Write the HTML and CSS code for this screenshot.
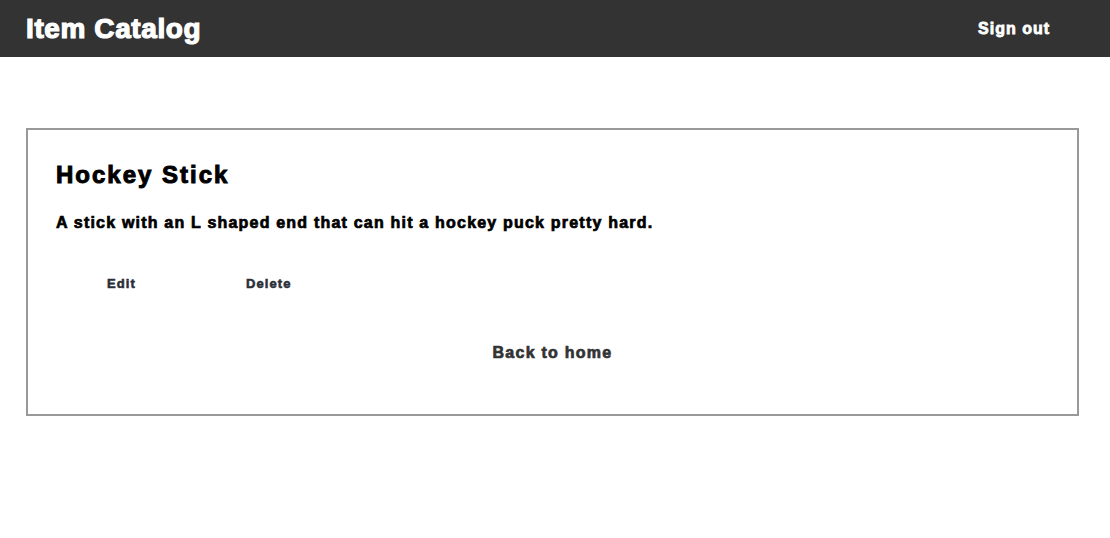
FILE: index.html
```html
<!DOCTYPE html>
<html>
<head>
<meta charset="utf-8">
<link rel="stylesheet" href="styles.css">
</head>
<body>
<header class="topbar">
  <div class="brand">Item Catalog</div>
  <a class="signout" href="#">Sign out</a>
</header>
<main class="card">
  <h1 class="item-title">Hockey Stick</h1>
  <p class="item-desc">A stick with an L shaped end that can hit a hockey puck pretty hard.</p>
  <div class="actions">
    <a class="action edit" href="#">Edit</a>
    <a class="action delete" href="#">Delete</a>
  </div>
  <div class="back"><a href="#">Back to home</a></div>
</main>
</body>
</html>
```
FILE: styles.css
```css
* { box-sizing: border-box; }
body {
  margin: 0;
  font-family: "Liberation Sans", Arial, sans-serif;
  font-weight: bold;
  background: #fff;
}
a { text-decoration: none; }
.topbar {
  height: 57px;
  background: #333333;
  display: flex;
  align-items: center;
  justify-content: space-between;
  padding: 0 60px 0 26px;
}
.brand {
  color: #fff;
  font-size: 28px;
  font-weight: bold;
  -webkit-text-stroke: 1.2px #fff;
  letter-spacing: 0.6px;
}
.signout {
  color: #fff;
  font-size: 16px;
  -webkit-text-stroke: 0.8px #fff;
  letter-spacing: 1px;
}
.card {
  margin: 71px 31px 0 26px;
  border: 2px solid #999999;
  padding: 28px 28px 51px 28px;
}
.item-title {
  margin: 0;
  font-size: 24px;
  color: #000;
  -webkit-text-stroke: 1px #000;
  letter-spacing: 2px;
  line-height: 34px;
}
.item-desc {
  margin: 21px 0 0 0;
  font-size: 16px;
  color: #000;
  -webkit-text-stroke: 0.7px #000;
  letter-spacing: 1.2px;
  line-height: 20px;
}
.actions {
  display: flex;
  margin-top: 43px;
  padding-left: 51px;
}
.action {
  font-size: 13px;
  color: #2a2e36;
  line-height: 16px;
  letter-spacing: 1.1px;
  -webkit-text-stroke: 0.55px #2a2e36;
}
.delete { margin-left: 110px; }
.back {
  text-align: center;
  margin-top: 51px;
}
.back a {
  font-size: 16px;
  color: #333;
  line-height: 20px;
  letter-spacing: 1.25px;
  -webkit-text-stroke: 0.7px #333;
}
```
